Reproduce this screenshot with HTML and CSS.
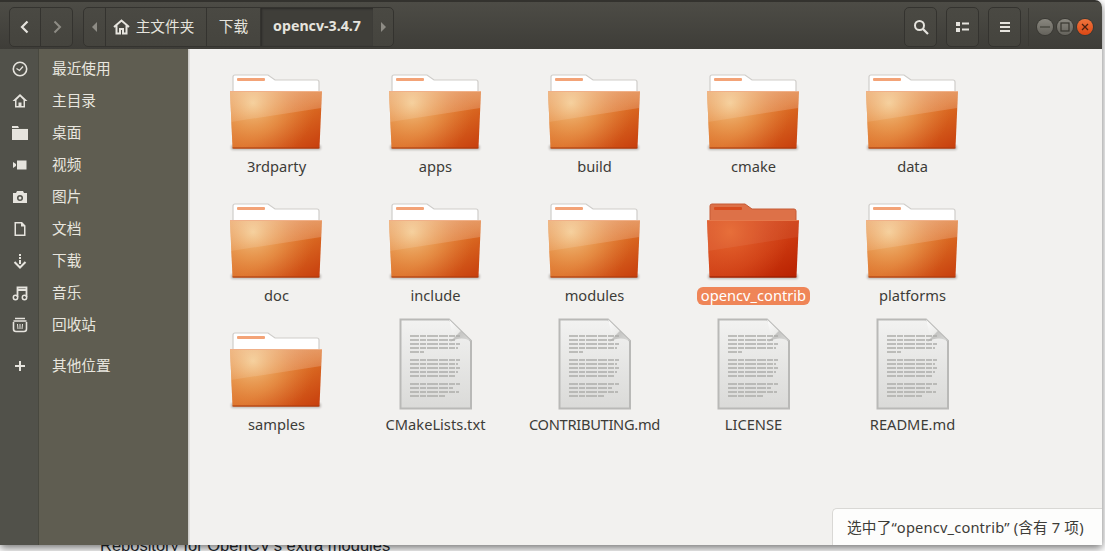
FILE: index.html
```html
<!DOCTYPE html>
<html lang="zh">
<head>
<meta charset="utf-8">
<title>opencv-3.4.7</title>
<link rel="stylesheet" href="styles.css">
</head>
<body>
<svg class="defs" width="0" height="0" aria-hidden="true">
  <defs>
    <filter id="soft" x="-10%" y="-10%" width="120%" height="140%"><feGaussianBlur stdDeviation="1.2"/></filter>
    <filter id="tiny" x="-5%" y="-20%" width="110%" height="140%"><feGaussianBlur stdDeviation=".35"/></filter>
    <linearGradient id="fb" x1="0" y1="0" x2="1" y2="1"><stop offset="0" stop-color="#e2853a"/><stop offset=".55" stop-color="#dc6e24"/><stop offset="1" stop-color="#c63c0c"/></linearGradient>
    <radialGradient id="fh" gradientUnits="userSpaceOnUse" cx="26" cy="47" r="62"><stop offset="0" stop-color="#f3c585"/><stop offset=".45" stop-color="#eca55e" stop-opacity=".6"/><stop offset="1" stop-color="#e07a40" stop-opacity="0"/></radialGradient>
    <linearGradient id="gl" gradientUnits="userSpaceOnUse" x1="0" y1="35" x2="0" y2="67"><stop offset="0" stop-color="#fff" stop-opacity=".28"/><stop offset="1" stop-color="#fff" stop-opacity=".09"/></linearGradient>
    <linearGradient id="fs" x1="0" y1="0" x2="1" y2="1"><stop offset="0" stop-color="#dc5426"/><stop offset=".6" stop-color="#cc3a10"/><stop offset="1" stop-color="#b71f00"/></linearGradient>
    <radialGradient id="fsh" gradientUnits="userSpaceOnUse" cx="26" cy="47" r="60"><stop offset="0" stop-color="#e6662e"/><stop offset="1" stop-color="#d84f24" stop-opacity="0"/></radialGradient>
    <linearGradient id="pg" x1="0" y1="0" x2="0" y2="1"><stop offset="0" stop-color="#f2f2f1"/><stop offset="1" stop-color="#dadad8"/></linearGradient>
    <linearGradient id="fg" x1="0" y1="0" x2="1" y2="1"><stop offset="0" stop-color="#fcfcfc"/><stop offset=".5" stop-color="#ececea"/><stop offset=".54" stop-color="#c4c4c2"/><stop offset="1" stop-color="#dcdcda"/></linearGradient>
    <symbol id="folder" viewBox="0 0 100 96">
      <rect x="4" y="89" width="90" height="5" rx="2" fill="#8f8a85" opacity=".55" filter="url(#soft)"/>
      <path d="M8 19H41L48 24H90Q92 24 92 26V40H6V21Q6 19 8 19Z" fill="#fff" stroke="#cfcdca" stroke-width="1.200"/>
      <rect x="10" y="22" width="28" height="3" rx="1" fill="#f3a377"/>
      <path d="M3 35H95L92.500 91.500Q92.400 92.500 91 92.500H7Q5.600 92.500 5.500 91.500Z" fill="url(#fb)"/>
      <path d="M3 35H95L92.500 91.500Q92.400 92.500 91 92.500H7Q5.600 92.500 5.500 91.500Z" fill="url(#fh)"/>
      <path d="M3 35H95L94.300 52 3.800 66Z" fill="url(#gl)"/>
      <path d="M3 35.500H95" stroke="#f0b088" stroke-width="1"/>
      <path d="M5.500 92H92.500" stroke="#a8380c" stroke-width="1"/>
    </symbol>
    <symbol id="folder-sel" viewBox="0 0 100 96">
      <rect x="4" y="89" width="90" height="5" rx="2" fill="#8f8a85" opacity=".55" filter="url(#soft)"/>
      <path d="M8 19H41L48 24H90Q92 24 92 26V40H6V21Q6 19 8 19Z" fill="#dd7148" stroke="#c65a34" stroke-width="1"/>
      <rect x="10" y="22" width="28" height="3" rx="1" fill="#d84c1e"/>
      <path d="M3 35H95L92.500 91.500Q92.400 92.500 91 92.500H7Q5.600 92.500 5.500 91.500Z" fill="url(#fs)"/>
      <path d="M3 35H95L92.500 91.500Q92.400 92.500 91 92.500H7Q5.600 92.500 5.500 91.500Z" fill="url(#fsh)"/>
      <path d="M3 35H95L94.300 52 3.800 66Z" fill="#fff" opacity=".06"/>
      <path d="M3 35.500H95" stroke="#e5794c" stroke-width="1"/>
      <path d="M5.500 92H92.500" stroke="#8e1d00" stroke-width="1"/>
    </symbol>
    <symbol id="doc" viewBox="-1 0 100 96">
      <path d="M13.500 5.500H62L84 27V94.500H13.500Z" fill="url(#pg)" stroke="#b9b9b7" stroke-width="2"/>
      <path d="M62 5.500C65 16 67 24 63 28C72 23 78 24 84 27Z" fill="url(#fg)"/>
      <g class="doc-lines" filter="url(#tiny)">
        <path d="M23 22H73M23 26H68M23 30H73M23 34H71M23 38H37"/>
        <path d="M23 46H73M23 50H71M23 54H73M23 58H71M23 62H68"/>
        <path d="M23 70H73M23 74H66M23 78H72M23 82H58"/>
      </g>
    </symbol>
  </defs>
</svg>

<main class="window">
  <header class="titlebar">
    <div class="btn-group nav">
      <button class="tb seg"><svg width="16" height="16" viewBox="0 0 16 16"><path d="M10.500 2.500 5 8l5.500 5.500" class="st" stroke="#e6e4de" stroke-width="2.200"/></svg></button>
      <button class="tb seg"><svg width="16" height="16" viewBox="0 0 16 16"><path d="M5.500 2.500 11 8l-5.500 5.500" class="st" stroke="#8e8c85" stroke-width="2"/></svg></button>
    </div>
    <nav class="path">
      <span class="crumb arrow"><svg width="8" height="12" viewBox="0 0 8 12"><path d="M6 1v10L1 6Z" fill="#8e8c85"/></svg></span>
      <span class="crumb home">
        <svg width="17" height="16" viewBox="0 0 17 16"><path d="M1 8 8.500 1.500 16 8M3.500 6.500V14.500H7V10H10V14.500H13.500V6.500" class="st" stroke="#e6e4de" stroke-width="2"/></svg>
        主文件夹</span>
      <span class="crumb dl">下载</span>
      <span class="crumb current">opencv-3.4.7</span>
      <span class="crumb arrow end"><svg width="8" height="12" viewBox="0 0 8 12"><path d="M2 1v10L7 6Z" fill="#8e8c85"/></svg></span>
    </nav>
    <div class="tools">
      <button class="tb tool"><svg width="16" height="16" viewBox="0 0 16 16"><circle cx="6.500" cy="6.500" r="4.500" class="st" stroke="#e6e4de" stroke-width="2"/><path d="M10 10l5 5" class="st" stroke="#e6e4de" stroke-width="2.200"/></svg></button>
      <button class="tb tool"><svg width="14" height="12" viewBox="0 0 14 12"><path d="M0 1h4v4H0zM0 7h4v4H0zM6 1.500h7V3.500H6zM6 7.500h7V9.500H6z" fill="#e6e4de"/></svg></button>
      <button class="tb tool"><svg width="12" height="12" viewBox="0 0 12 12"><path d="M1 1h10v2H1zM1 5h10v2H1zM1 9h10v2H1z" fill="#e6e4de"/></svg></button>
    </div>
    <div class="controls">
      <span class="wc"><svg width="10" height="10" viewBox="0 0 10 10"><path d="M0 5h10" stroke="#37362f" stroke-width="1.200"/></svg></span>
      <span class="wc"><svg width="10" height="10" viewBox="0 0 10 10"><rect x="1" y="1" width="8" height="8" fill="none" stroke="#37362f" stroke-width="1.200"/></svg></span>
      <span class="wc close"><svg width="8" height="8" viewBox="0 0 8 8"><path d="M1 1l6 6M7 1 1 7" stroke="#4a2010" stroke-width="1.300"/></svg></span>
    </div>
  </header>

  <div class="body">
    <aside class="sidebar">
      <div class="side-item"><span class="ic"><svg width="16" height="16" viewBox="0 0 16 16"><circle cx="8" cy="8" r="6.700" class="st" stroke="#e6e4de" stroke-width="1.600"/><path d="M4.500 7.500 7.500 9.500 11 5.500" class="st" stroke="#e6e4de" stroke-width="1.300"/></svg></span><span class="lbl">最近使用</span></div>
      <div class="side-item"><span class="ic"><svg width="16" height="16" viewBox="0 0 16 16"><path fill-rule="evenodd" d="M8 1 .5 8h2.500v6.500h10V8h2.500ZM8 3.500 11.500 7v6H9.500V9.500h-3V13H4.500V7Z" fill="#e6e4de"/></svg></span><span class="lbl">主目录</span></div>
      <div class="side-item"><span class="ic"><svg width="16" height="16" viewBox="0 0 16 16"><path d="M0 1h6l1 2H0zM0 4h16v11H0z" fill="#e6e4de"/><path d="M0 3.500h16" stroke="#5a5a52" stroke-width=".8"/></svg></span><span class="lbl">桌面</span></div>
      <div class="side-item"><span class="ic"><svg width="16" height="16" viewBox="0 0 16 16"><path d="M5 3.500h9.500v9H5zM1 5l3 2v2l-3 2z" fill="#e6e4de"/></svg></span><span class="lbl">视频</span></div>
      <div class="side-item"><span class="ic"><svg width="16" height="16" viewBox="0 0 16 16"><path fill-rule="evenodd" d="M5 2h6l1 2h3v10H1V4h3ZM8 6a3 3 0 1 0 0 6 3 3 0 0 0 0-6Z" fill="#e6e4de"/><circle cx="8" cy="9" r="1.500" fill="#e6e4de"/></svg></span><span class="lbl">图片</span></div>
      <div class="side-item"><span class="ic"><svg width="16" height="16" viewBox="0 0 16 16"><path fill-rule="evenodd" d="M2.500 1H10l3.500 3.500V15H2.500ZM4 2.500V13.500H12V5.500H9V2.500Z" fill="#e6e4de"/></svg></span><span class="lbl">文档</span></div>
      <div class="side-item"><span class="ic"><svg width="16" height="16" viewBox="0 0 16 16"><path d="M7 1h2v2H7zM7 4h2v2H7zM7 7h2v4H7z" fill="#e6e4de"/><path d="M2.500 9 8 14.500 13.500 9" class="st" stroke="#e6e4de" stroke-width="2"/></svg></span><span class="lbl">下载</span></div>
      <div class="side-item"><span class="ic"><svg width="16" height="16" viewBox="0 0 16 16"><path d="M5.500 12V2.500H14.500V12M5.500 5H14.500" class="st" stroke="#e6e4de" stroke-width="1.800"/><circle cx="3.500" cy="12.500" r="2.200" class="st" stroke="#e6e4de" stroke-width="1.500"/><circle cx="12.500" cy="12.500" r="2.200" class="st" stroke="#e6e4de" stroke-width="1.500"/></svg></span><span class="lbl">音乐</span></div>
      <div class="side-item"><span class="ic"><svg width="16" height="16" viewBox="0 0 16 16"><path d="M3 1.500h10M1.500 4h13" class="st" stroke="#e6e4de" stroke-width="1.600"/><path d="M1.500 5v7q0 2.500 2.500 2.500h8q2.500 0 2.500-2.500V5" class="st" stroke="#e6e4de" stroke-width="1.600"/><path d="M5.500 7l.5 5M8 7v5M10.500 7l-.5 5" class="st" stroke="#e6e4de" stroke-width="1"/></svg></span><span class="lbl">回收站</span></div>
      <div class="side-item other"><span class="ic"><svg width="16" height="16" viewBox="0 0 16 16"><path d="M7 3h2v4h4v2H9v4H7V9H3V7h4Z" fill="#e6e4de"/></svg></span><span class="lbl">其他位置</span></div>
    </aside>

    <section class="files">
      <figure class="file"><svg class="icon"><use href="#folder"/></svg><figcaption>3rdparty</figcaption></figure>
      <figure class="file"><svg class="icon"><use href="#folder"/></svg><figcaption>apps</figcaption></figure>
      <figure class="file"><svg class="icon"><use href="#folder"/></svg><figcaption>build</figcaption></figure>
      <figure class="file"><svg class="icon"><use href="#folder"/></svg><figcaption>cmake</figcaption></figure>
      <figure class="file"><svg class="icon"><use href="#folder"/></svg><figcaption>data</figcaption></figure>
      <figure class="file"><svg class="icon"><use href="#folder"/></svg><figcaption>doc</figcaption></figure>
      <figure class="file"><svg class="icon"><use href="#folder"/></svg><figcaption>include</figcaption></figure>
      <figure class="file"><svg class="icon"><use href="#folder"/></svg><figcaption>modules</figcaption></figure>
      <figure class="file selected"><svg class="icon"><use href="#folder-sel"/></svg><figcaption>opencv_contrib</figcaption></figure>
      <figure class="file"><svg class="icon"><use href="#folder"/></svg><figcaption>platforms</figcaption></figure>
      <figure class="file"><svg class="icon"><use href="#folder"/></svg><figcaption>samples</figcaption></figure>
      <figure class="file"><svg class="icon"><use href="#doc"/></svg><figcaption>CMakeLists.txt</figcaption></figure>
      <figure class="file"><svg class="icon"><use href="#doc"/></svg><figcaption class="caps">CONTRIBUTING.md</figcaption></figure>
      <figure class="file"><svg class="icon"><use href="#doc"/></svg><figcaption>LICENSE</figcaption></figure>
      <figure class="file"><svg class="icon"><use href="#doc"/></svg><figcaption>README.md</figcaption></figure>
      <div class="status">选中了“opencv_contrib” (含有 7 项)</div>
    </section>
  </div>
</main>
<p class="behind">Repository for OpenCV's extra modules</p>
</body>
</html>
```
FILE: styles.css
```css
* { box-sizing: border-box; }
html, body { height: 100%; }
body {
  margin: 0;
  background: #fff;
  overflow: hidden;
  font-family: "Noto Sans", "Noto Sans CJK SC", sans-serif;
  font-size: 14.67px;
}
.defs { display: block; height: 0; }
.st { fill: none; }
.window {
  position: relative;
  z-index: 1;
  width: 1102px;
  height: 545px;
  display: flex;
  flex-direction: column;
  border-top-right-radius: 7px;
  overflow: hidden;
  box-shadow: 0 3px 8px rgba(0,0,0,.55);
}
.titlebar {
  height: 49px;
  flex: none;
  display: flex;
  align-items: center;
  padding: 3px 0 0 9px;
  background: linear-gradient(#4d4c46, #3e3d38);
  border-top: 2px solid #33322e;
  color: #e6e4de;
}
.tb {
  border: 1px solid #34332f;
  background: linear-gradient(#4a4943, #45443e);
  height: 40px;
  padding: 0;
  display: flex;
  align-items: center;
  justify-content: center;
}
.btn-group { display: flex; }
.seg { width: 32px; }
.seg:first-child { border-radius: 5px 0 0 5px; }
.seg:last-child { border-radius: 0 5px 5px 0; border-left: 0; }
.path {
  display: flex;
  margin-left: 10px;
  height: 40px;
  border: 1px solid #34332f;
  border-radius: 5px;
  background: linear-gradient(#4a4943, #45443e);
  overflow: hidden;
}
.crumb {
  display: flex;
  align-items: center;
  justify-content: center;
  gap: 6px;
  border-right: 1px solid #34332f;
  font-size: 14.67px;
  padding-bottom: 3px;
}
.arrow { width: 22px; padding-bottom: 0; }
.home { width: 101px; padding-right: 5px; }
.home svg { margin-top: 2px; }
.dl { width: 54px; }
.current {
  width: 112px;
  background: #3f3e39;
  font-weight: 700;
  font-size: 14.2px;
  border-right: 0;
  box-shadow: inset 1px 1px 2px #2c2b28;
}
.end { width: 20px; border-right: 0; }
.tools { display: flex; gap: 9px; margin-left: auto; }
.tool { width: 33px; border-radius: 5px; }
.controls {
  display: flex;
  align-items: center;
  gap: 4px;
  margin-left: 7px;
  padding: 0 9px 0 8px;
  height: 38px;
  border-left: 1px solid #3a3934;
}
.wc {
  width: 16px;
  height: 16px;
  border-radius: 50%;
  display: flex;
  align-items: center;
  justify-content: center;
  background: linear-gradient(#89877f, #65635c);
  box-shadow: 0 0 0 1px #3a3934;
}
.close { background: linear-gradient(#f0743c, #dd4814); }
.body { flex: 1; min-height: 0; display: flex; }
.sidebar {
  width: 190px;
  flex: none;
  padding-top: 4px;
  background: linear-gradient(90deg, #51514a 38px, #48483f 38px, #48483f 39px, #5f5d51 39px, #5f5d51 188px, #c6c5c1 188px, #e6e5e3 190px);
  color: #e8e6df;
}
.side-item {
  height: 32px;
  display: flex;
  align-items: center;
  font-size: 14.67px;
}
.lbl { padding-bottom: 2px; line-height: 20px; }
.ic { width: 52px; padding-left: 12px; display: flex; align-items: center; }
.other { margin-top: 9px; }
.files {
  position: relative;
  flex: 1;
  padding: 7px 0 0 7px;
  background: #f2f1ef;
  display: grid;
  grid-template-columns: repeat(5, 159px);
  grid-auto-rows: 120px;
  row-gap: 9px;
  align-content: start;
}
.file {
  margin: 0;
  display: flex;
  flex-direction: column;
  align-items: center;
  color: #3d3c38;
}
.icon { width: 100px; height: 96px; flex: none; }
.file figcaption {
  margin-top: 6px;
  height: 18px;
  line-height: 16px;
  padding: 0 4px 2px;
  border-radius: 6px;
  white-space: nowrap;
}
.file .caps { letter-spacing: -.3px; }
.selected figcaption { background: #ef8557; color: #fff; }
.doc-lines path { fill: none; stroke: #adadab; stroke-width: 1.700; stroke-dasharray: 9 1 6 1 11 1; }
.status {
  position: absolute;
  right: 0;
  bottom: 0;
  width: 270px;
  height: 37px;
  padding: 0 0 2px 14px;
  display: flex;
  align-items: center;
  letter-spacing: .16px;
  color: #3d3c38;
  background: #fdfdfc;
  border: 1px solid #d9d8d5;
  border-width: 1px 0 0 1px;
  border-top-left-radius: 5px;
  white-space: nowrap;
}
.behind {
  margin: -10px 0 0 100px;
  font-family: "Liberation Sans", sans-serif;
  font-size: 16.5px;
  line-height: 20px;
  color: #24292e;
  white-space: nowrap;
}
```
